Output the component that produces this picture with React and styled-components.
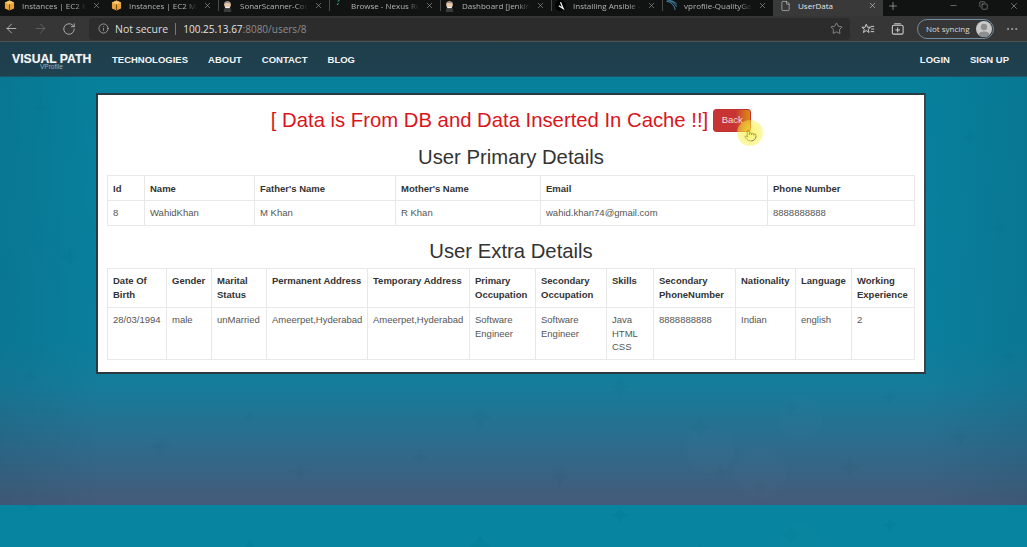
import React from "react";
import styled, { createGlobalStyle } from "styled-components";
import { ArrowLeft, ArrowRight, RotateCw, Info, Star, Plus, Minus, X, Copy, File, MoreHorizontal, Pointer } from "lucide-react";

// faint star and circle pattern of the site's background
const marks = [
  [40, 30, 9], [150, 70, 7], [70, 180, 10], [30, 300, 8], [160, 370, 11], [250, 340, 7], [300, 395, 9],
  [420, 380, 8], [480, 340, 12], [560, 400, 10], [620, 310, 9], [700, 350, 12], [720, 395, 8], [790, 330, 10],
  [850, 390, 11], [890, 320, 8], [960, 360, 10], [1000, 150, 9], [970, 60, 8], [1010, 280, 7], [760, 410, 9],
];
const star = ([x, y, r]) =>
  `<path d="M${x} ${y - r}L${x + r * 0.3} ${y - r * 0.3}L${x + r} ${y}L${x + r * 0.3} ${y + r * 0.3}L${x} ${y + r}L${x - r * 0.3} ${y + r * 0.3}L${x - r} ${y}L${x - r * 0.3} ${y - r * 0.3}Z"/>`;
const textureSvg = `<svg xmlns="http://www.w3.org/2000/svg" width="1027" height="428"><g fill="#06384e" fill-opacity=".03">${marks
  .map(star)
  .join("")}</g><g fill="#ffffff" fill-opacity=".01"><circle cx="760" cy="395" r="26"/><circle cx="800" cy="340" r="22"/><circle cx="710" cy="372" r="24"/></g></svg>`;
const texture = `url("data:image/svg+xml,${encodeURIComponent(textureSvg)}")`;

const GlobalStyle = createGlobalStyle`
  html, body { margin: 0; padding: 0; height: 100%; overflow: hidden; }
  body { font-family: "Liberation Sans", Arial, sans-serif; background: #07849f; }
  * { box-sizing: border-box; }
`;

const Page = styled.div`
  width: 1027px;
  height: 547px;
  display: flex;
  flex-direction: column;
  overflow: hidden;
`;

/* browser chrome */
const TabStrip = styled.div`
  height: 16px;
  background: #111212;
  display: flex;
  align-items: flex-start;
  font-family: "Open Sans", sans-serif;
  overflow: hidden;
`;

const Tab = styled.div`
  flex: 0 0 auto;
  width: ${(p) => p.$w || 111}px;
  min-width: 0;
  height: 16px;
  display: flex;
  align-items: center;
  padding: 0 6px 5px ${(p) => p.$pad ?? 4}px;
  color: ${(p) => (p.$active ? "#e6e6e6" : "#b4b4b4")};
  background: ${(p) => (p.$active ? "#393939" : "transparent")};
  font-size: 8px;
  white-space: nowrap;
  position: relative;

  & + &::before {
    content: "";
    display: ${(p) => (p.$active ? "none" : "block")};
    position: absolute;
    left: 0;
    top: 0;
    height: 11px;
    width: 1px;
    background: #4a4a4a;
  }
`;

const TabIcon = styled.span`
  flex: 0 0 11px;
  width: 11px;
  height: 11px;
  margin-right: 7px;
  display: flex;
  align-items: center;
  justify-content: center;
`;

const TabTitle = styled.span`
  flex: 1;
  min-width: 0;
  margin-right: 6px;
  overflow: hidden;
  -webkit-mask-image: ${(p) => (p.$plain ? "none" : "linear-gradient(90deg, #000 82%, transparent)")};
  mask-image: ${(p) => (p.$plain ? "none" : "linear-gradient(90deg, #000 82%, transparent)")};
`;

const WindowButtons = styled.div`
  margin-left: auto;
  height: 11px;
  display: flex;
  align-items: center;
  gap: 21px;
  padding-right: 8px;
  color: #c9c9c9;
`;

const NewTab = styled.div`
  color: #cfcfcf;
  height: 11px;
  display: flex;
  align-items: center;
  margin-left: 4px;
`;

const Toolbar = styled.div`
  height: 26px;
  background: #363636;
  border-bottom: 1px solid #4d5152;
  display: flex;
  align-items: center;
  padding: 0 0 0 4px;
  color: #d6d6d6;
  font-family: "Open Sans", sans-serif;
`;

const NavIcons = styled.div`
  display: flex;
  align-items: center;
  width: 85px;
  gap: 14px;
`;

const AddressField = styled.div`
  width: 761px;
  height: 22px;
  border-radius: 4px;
  background: #2c2c2c;
  display: flex;
  align-items: center;
  padding: 0 7px 0 9px;
  font-size: 10.5px;
`;

const NotSecure = styled.span`
  margin-left: 6px;
  color: #dedede;
`;

const Divider = styled.span`
  width: 1px;
  height: 12px;
  background: #777;
  margin: 0 7px 0 7px;
`;

const Host = styled.span`
  color: #e4e4e4;
  font-size: 10px;
`;

const Path = styled.span`
  color: #8d8d8d;
  font-size: 10px;
`;

const EndIcons = styled.div`
  margin-left: auto;
  display: flex;
`;

const ToolIcons = styled.div`
  display: flex;
  align-items: center;
  flex: 1;
  padding-left: 11px;
  gap: 15px;
`;

const SyncPill = styled.div`
  width: 77px;
  height: 20px;
  border: 1px solid #6f8ea3;
  border-radius: 10px;
  display: flex;
  align-items: center;
  justify-content: space-between;
  padding: 0 1px 0 8px;
  font-size: 8px;
  color: #dcdcdc;
`;

const Avatar = styled.span`
  width: 16px;
  height: 16px;
  border-radius: 50%;
  background: #c9c9c9;
  display: flex;
  overflow: hidden;
`;

const MoreButton = styled.div`
  margin: 0 8px 0 11px;
  display: flex;
  color: #bdbdbd;
`;

/* site navbar */
const Navbar = styled.nav`
  height: 35px;
  background: linear-gradient(180deg, #1e3e4c, #20414f);
  border-bottom: 1px solid #1c5565;
  display: flex;
  align-items: center;
  padding: 0 18px 0 12px;
  color: #f2f5f6;
  font-weight: 700;
  font-size: 9.5px;
`;

const Brand = styled.div`
  position: relative;
  font-size: 12.2px;
  width: 100px;
  text-shadow: 0 0 1px rgba(255, 255, 255, 0.4);
`;

const BrandSub = styled.span`
  position: absolute;
  left: 28px;
  top: 11px;
  font-size: 6.5px;
  font-weight: 400;
  color: #9fb4bd;
  text-shadow: none;
`;

const NavGroup = styled.div`
  display: flex;
  gap: 20px;
  margin-left: ${(p) => (p.$right ? "auto" : "0")};
`;

const NavLink = styled.a`
  color: inherit;
`;

/* content */
const Main = styled.main`
  height: 428px;
  flex: none;
  background:
    ${texture},
    linear-gradient(90deg, rgba(10, 60, 80, 0.12), transparent 10%, transparent 90%, rgba(10, 60, 80, 0.12)),
    linear-gradient(180deg, #07809c 0%, #0a7f9d 62%, #157c9b 72%, #2f6a8b 87%, #455a78 100%);
  padding: 16px 0 0 96px;
`;

const Footer = styled.div`
  flex: 1;
  background: ${texture} 0 -300px, #07849f;
`;

const Card = styled.div`
  width: 830px;
  height: 281px;
  background: #fff;
  border: 2px solid #2b3a42;
  border-right-color: #3a444a;
  padding: 0 9px;
  color: #333;
`;

const TitleRow = styled.div`
  display: flex;
  justify-content: center;
  align-items: center;
  height: 50px;
  padding-top: 1px;
`;

const AlertTitle = styled.h2`
  margin: 0;
  font-weight: 400;
  font-size: 20.3px;
  color: #d9151b;
`;

const BackWrap = styled.span`
  position: relative;
  margin-left: 5px;
  display: flex;
`;

const BackButton = styled.button`
  width: 38px;
  height: 23px;
  border: 1px solid #c0302f;
  border-radius: 3px;
  background: linear-gradient(90deg, #c73433 60%, #d8701f 85%, #d98a18);
  color: #f6dcdc;
  font-family: inherit;
  font-size: 9.5px;
  padding: 0 0 3px;
`;

const CursorGlow = styled.span`
  position: absolute;
  left: 24px;
  top: 11px;
  width: 26px;
  height: 26px;
  padding-top: 5px;
  border-radius: 50%;
  background: radial-gradient(circle, rgba(250, 240, 60, 0.75), rgba(250, 240, 70, 0.45) 70%, rgba(250, 240, 70, 0) 100%);
  display: flex;
  align-items: center;
  justify-content: center;
  color: #8a8a4a;
`;

const SectionTitle = styled.h3`
  margin: ${(p) => p.$top || 0}px 0 0;
  font-weight: 400;
  font-size: 20.3px;
  line-height: 24px;
  text-align: center;
  color: #333;
`;

const Table = styled.table`
  width: 807px;
  table-layout: fixed;
  border-collapse: collapse;
  font-size: 9.5px;
  line-height: 13.5px;
  margin-top: ${(p) => p.$top || 0}px;
`;

const Th = styled.th`
  border: 1px solid #e8e8e8;
  padding: ${(p) => (p.$lower ? 6 : 5)}px 2px 4px 5px;
  height: ${(p) => p.$h}px;
  text-align: left;
  vertical-align: top;
  font-weight: 700;
  color: #333;
`;

const Td = styled.td`
  border: 1px solid #e8e8e8;
  padding: 5px 2px 4px 5px;
  height: ${(p) => p.$h}px;
  vertical-align: top;
  color: #555;
`;

const primaryCols = [37, 110, 141, 145, 227, 147];
const extraCols = [59, 45, 55, 101, 102, 66, 71, 47, 82, 60, 56, 63];

const primaryHead = ["Id", "Name", "Father's Name", "Mother's Name", "Email", "Phone Number"];
const primaryRow = ["8", "WahidKhan", "M Khan", "R Khan", "wahid.khan74@gmail.com", "8888888888"];

const extraHead = [
  "Date Of Birth", "Gender", "Marital Status", "Permanent Address", "Temporary Address", "Primary Occupation",
  "Secondary Occupation", "Skills", "Secondary PhoneNumber", "Nationality", "Language", "Working Experience",
];
const extraRow = [
  "28/03/1994", "male", "unMarried", "Ameerpet,Hyderabad", "Ameerpet,Hyderabad", "Software Engineer",
  "Software Engineer", "Java HTML CSS", "8888888888", "Indian", "english", "2",
];

const AwsIcon = () => (
  <svg width="11" height="11" viewBox="0 0 12 12">
    <path d="M6 0.5 11 2.6V9.2L6 11.5 1 9.2V2.6Z" fill="#e8a33a" />
    <path d="M1 2.6 6 4.8 11 2.6 6 .5Z" fill="#f6c66b" />
    <path d="M6 4.8V11.5" stroke="#7a4d10" strokeWidth="1.2" />
  </svg>
);

const JenkinsIcon = () => (
  <svg width="11" height="12" viewBox="0 0 12 13">
    <path d="M2 11.5C2 9 3.5 8.5 6 8.5S10 9 10 11.5V13H2Z" fill="#3a3a3a" />
    <circle cx="6" cy="5" r="3.6" fill="#e9c9a8" />
    <path d="M2.5 4C3 1 9 1 9.5 4 7.5 2.8 4.5 2.8 2.5 4Z" fill="#8b8b8b" />
    <path d="M3.5 7.5H8.5V8.8H3.5Z" fill="#f0f0f0" />
  </svg>
);

const NexusIcon = () => (
  <svg width="11" height="11" viewBox="0 0 12 12">
    <path d="M5 1.5 7 0.5M4.5 5.5 6 3.5" stroke="#2fb37a" strokeWidth="1.2" fill="none" />
  </svg>
);

const AnsibleIcon = () => (
  <svg width="11" height="11" viewBox="0 0 12 12">
    <circle cx="6" cy="6" r="6" fill="#000" />
    <path d="M6 2.5 9 9.5 4.2 6.2" fill="none" stroke="#fff" strokeWidth="1.3" />
  </svg>
);

const SonarIcon = () => (
  <svg width="12" height="12" viewBox="0 0 12 12" fill="none" stroke="#4f9bc4" strokeWidth="0.9">
    <path d="M0.5 1C5 1.2 9 4.5 10 10.5" />
    <path d="M1.5 0C6 .4 10 3 11.5 7" />
    <path d="M4 0C7 .4 10 2 11.8 4" />
  </svg>
);

const FavoritesIcon = () => (
  <svg width="14" height="14" viewBox="0 0 16 16" fill="none" stroke="#cfcfcf" strokeWidth="1.1">
    <path d="M6 2.5 7.4 6H11L8.2 8.3 9.2 12 6 9.8 2.8 12 3.8 8.3 1 6H4.6Z" />
    <path d="M11 5H15M11.5 8H15M11 11H15" />
  </svg>
);

const CollectionsIcon = () => (
  <svg width="15" height="15" viewBox="0 0 16 16" fill="none" stroke="#cfcfcf" strokeWidth="1.1">
    <path d="M4.5 3H11.5" />
    <path d="M2.5 6C2.5 5 3 4.5 4 4.5H12.5C13.5 4.5 14 5 14 6V12.5C14 13.5 13.5 14 12.5 14H4C3 14 2.5 13.5 2.5 12.5Z" />
    <path d="M8.2 7V12M5.8 9.5H10.8" />
  </svg>
);

const AvatarFace = () => (
  <svg width="16" height="16" viewBox="0 0 16 16">
    <circle cx="8" cy="6" r="3.2" fill="#8f8f8f" />
    <path d="M2 16C2 11.5 5 10.5 8 10.5S14 11.5 14 16Z" fill="#8f8f8f" />
  </svg>
);

const tabs = [
  { title: "Instances | EC2 Manag", icon: <AwsIcon /> },
  { title: "Instances | EC2 Manag", icon: <AwsIcon /> },
  { title: "SonarScanner-Code", icon: <JenkinsIcon /> },
  { title: "Browse - Nexus Repos", icon: <NexusIcon /> },
  { title: "Dashboard [Jenkins]", icon: <JenkinsIcon /> },
  { title: "Installing Ansible –", icon: <AnsibleIcon /> },
  { title: "vprofile-QualityGate", icon: <SonarIcon /> },
];

const App = () => (
  <Page>
    <GlobalStyle />
    <TabStrip>
      {tabs.map((t, i) => (
        <Tab key={i} $w={i === 0 ? 107 : 111}>
          <TabIcon>{t.icon}</TabIcon>
          <TabTitle>{t.title}</TabTitle>
          <X size={9} strokeWidth={1.4} />
        </Tab>
      ))}
      <Tab $active $w={110} $pad={7}>
        <TabIcon><File size={12} strokeWidth={1.2} /></TabIcon>
        <TabTitle $plain>UserData</TabTitle>
        <X size={9} strokeWidth={1.4} />
      </Tab>
      <NewTab><Plus size={12} strokeWidth={1.2} /></NewTab>
      <WindowButtons>
        <Minus size={9} strokeWidth={1.2} />
        <Copy size={9} strokeWidth={1.2} />
        <X size={10} strokeWidth={1.2} />
      </WindowButtons>
    </TabStrip>

    <Toolbar>
      <NavIcons>
        <ArrowLeft size={15} strokeWidth={1.2} />
        <ArrowRight size={15} strokeWidth={1.2} color="#6f6f6f" />
        <RotateCw size={14} strokeWidth={1.2} />
      </NavIcons>
      <AddressField>
        <Info size={11} strokeWidth={1.3} />
        <NotSecure>Not secure</NotSecure>
        <Divider />
        <Host>100.25.13.67</Host>
        <Path>:8080/users/8</Path>
        <EndIcons><Star size={13} strokeWidth={1.1} color="#bdbdbd" /></EndIcons>
      </AddressField>
      <ToolIcons>
        <FavoritesIcon />
        <CollectionsIcon />
      </ToolIcons>
      <SyncPill>
        Not syncing
        <Avatar><AvatarFace /></Avatar>
      </SyncPill>
      <MoreButton><MoreHorizontal size={14} strokeWidth={1.2} /></MoreButton>
    </Toolbar>

    <Navbar>
      <Brand>
        VISUAL PATH
        <BrandSub>VProfile</BrandSub>
      </Brand>
      <NavGroup>
        <NavLink>TECHNOLOGIES</NavLink>
        <NavLink>ABOUT</NavLink>
        <NavLink>CONTACT</NavLink>
        <NavLink>BLOG</NavLink>
      </NavGroup>
      <NavGroup $right>
        <NavLink>LOGIN</NavLink>
        <NavLink>SIGN UP</NavLink>
      </NavGroup>
    </Navbar>

    <Main>
      <Card>
        <TitleRow>
          <AlertTitle>[ Data is From DB and Data Inserted In Cache !!]</AlertTitle>
          <BackWrap>
            <BackButton>Back</BackButton>
            <CursorGlow><Pointer size={13} strokeWidth={1.2} /></CursorGlow>
          </BackWrap>
        </TitleRow>
        <SectionTitle>User Primary Details</SectionTitle>
        <Table $top={6}>
          <colgroup>{primaryCols.map((w, i) => <col key={i} width={w} />)}</colgroup>
          <thead>
            <tr>{primaryHead.map((h) => <Th key={h} $h={25} $lower>{h}</Th>)}</tr>
          </thead>
          <tbody>
            <tr>{primaryRow.map((c, i) => <Td key={i} $h={25}>{c}</Td>)}</tr>
          </tbody>
        </Table>
        <SectionTitle $top={13}>User Extra Details</SectionTitle>
        <Table $top={5}>
          <colgroup>{extraCols.map((w, i) => <col key={i} width={w} />)}</colgroup>
          <thead>
            <tr>{extraHead.map((h) => <Th key={h} $h={39}>{h}</Th>)}</tr>
          </thead>
          <tbody>
            <tr>{extraRow.map((c, i) => <Td key={i} $h={52}>{c}</Td>)}</tr>
          </tbody>
        </Table>
      </Card>
    </Main>
    <Footer />
  </Page>
);

export default App;
